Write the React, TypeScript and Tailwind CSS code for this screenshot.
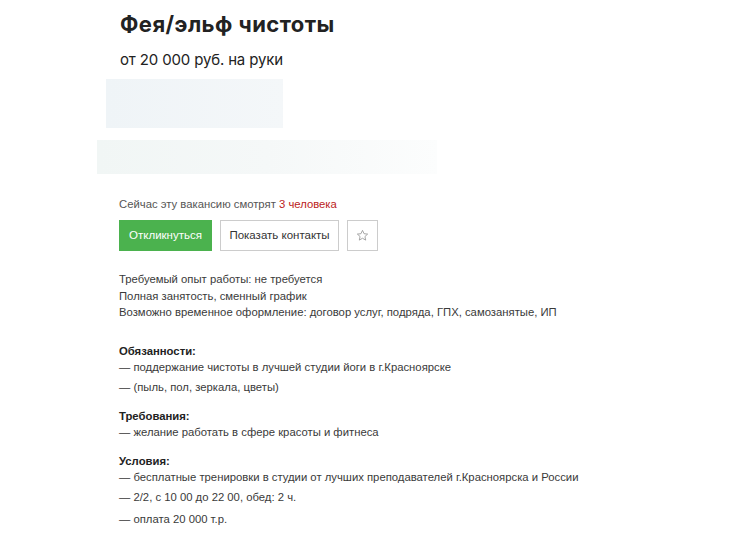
import React from "react";

const arial = { fontFamily: '"Liberation Sans", Arial, sans-serif' };

function Item({ children }: { children: React.ReactNode }) {
  return <div className="leading-[16px] mb-[4px]">— {children}</div>;
}

export default function App() {
  return (
    <div className="w-[750px] h-[548px] bg-white overflow-hidden relative">
      <div className="pl-[120px] pt-[10px]">
        <h1
          className="text-[22px] font-bold leading-[28px] text-[#222] tracking-[0.45px]"
          style={{ fontFamily: 'Inter, "Noto Sans", sans-serif' }}
        >
          Фея/эльф чистоты
        </h1>
        <div
          className="text-[15px] leading-[20px] mt-[12px] text-[#222] tracking-[-0.15px]"
          style={{ fontFamily: 'Inter, "Noto Sans", sans-serif' }}
        >
          от 20 000 руб. на руки
        </div>
      </div>
      <div className="ml-[106px] mt-[9px] w-[177px] h-[49px] bg-gradient-to-r from-[#eff4f7] to-[#f4f7f9]" />
      <div className="ml-[97px] mt-[12px] w-[340px] h-[34px] bg-gradient-to-r from-[#f1f6f5] via-[#f5f8f8] to-[#fcfdfd]" />
      <div className="pl-[119px] text-[11.3px] text-[#3a3a3a]" style={arial}>
        <div className="mt-[22px] leading-[16px] text-[#555]">
          Сейчас эту вакансию смотрят <span className="text-[#b22]">3 человека</span>
        </div>
        <div className="flex gap-[8px] mt-[8px]">
          <button className="w-[93px] h-[31px] bg-[#4bb24e] text-white text-[11.5px]" style={arial}>
            Откликнуться
          </button>
          <button className="w-[119px] h-[31px] border border-[#ccc] bg-white text-[#333] text-[11.5px]" style={arial}>
            Показать контакты
          </button>
          <button className="w-[31px] h-[31px] border border-[#ccc] bg-white flex items-center justify-center">
            <svg width="13" height="13" viewBox="0 0 24 24" fill="none" stroke="#999" strokeWidth="1.6" strokeLinejoin="round">
              <polygon points="12,2.5 14.9,8.7 21.5,9.4 16.5,13.9 17.9,20.5 12,17.1 6.1,20.5 7.5,13.9 2.5,9.4 9.1,8.7" />
            </svg>
          </button>
        </div>
        <div className="mt-[20px] leading-[16.5px]">
          <div>Требуемый опыт работы: не требуется</div>
          <div>Полная занятость, сменный график</div>
          <div>Возможно временное оформление: договор услуг, подряда, ГПХ, самозанятые, ИП</div>
        </div>
        <div className="mt-[22px]">
          <div className="font-bold leading-[16px] text-[#222]">Обязанности:</div>
          <Item>поддержание чистоты в лучшей студии йоги в г.Красноярске</Item>
          <Item>(пыль, пол, зеркала, цветы)</Item>
        </div>
        <div className="mt-[13px]">
          <div className="font-bold leading-[16px] text-[#222]">Требования:</div>
          <Item>желание работать в сфере красоты и фитнеса</Item>
        </div>
        <div className="mt-[13px]">
          <div className="font-bold leading-[16px] text-[#222]">Условия:</div>
          <Item>бесплатные тренировки в студии от лучших преподавателей г.Красноярска и России</Item>
          <Item>2/2, с 10 00 до 22 00, обед: 2 ч.</Item>
          <div className="leading-[16px] mt-[6px]">— оплата 20 000 т.р.</div>
        </div>
      </div>
    </div>
  );
}
